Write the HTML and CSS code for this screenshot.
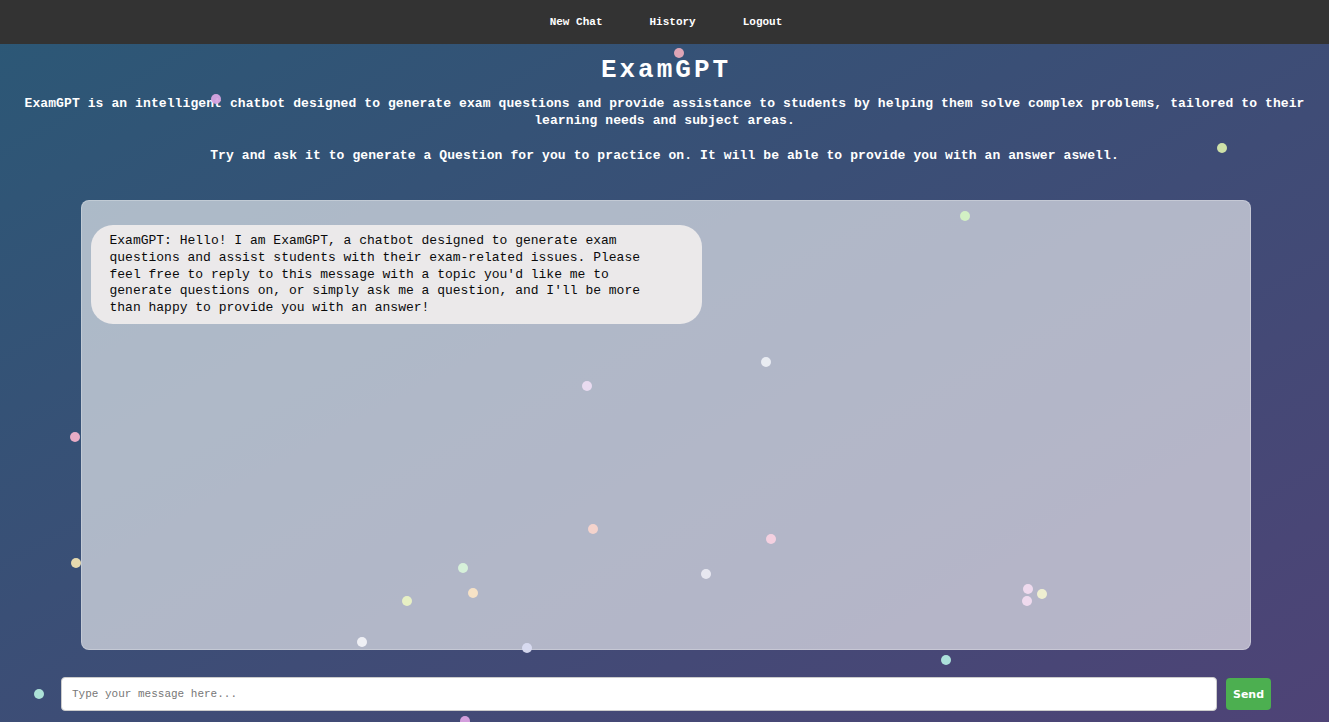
FILE: index.html
```html
<!DOCTYPE html>
<html lang="en">
<head>
<meta charset="utf-8">
<title>ExamGPT</title>
<link rel="stylesheet" href="styles.css">
</head>
<body>
<nav class="navbar">
  <a class="nav-link" href="#">New Chat</a>
  <a class="nav-link" href="#">History</a>
  <a class="nav-link" href="#">Logout</a>
</nav>
<main class="main">
  <h1 class="title">ExamGPT</h1>
  <p class="intro">ExamGPT is an intelligent chatbot designed to generate exam questions and provide assistance to students by helping them solve complex problems, tailored to their learning needs and subject areas.</p>
  <p class="intro intro-second">Try and ask it to generate a Question for you to practice on. It will be able to provide you with an answer aswell.</p>
  <section class="chat-box">
    <div class="bubble bot">ExamGPT: Hello! I am ExamGPT, a chatbot designed to generate exam questions and assist students with their exam-related issues. Please feel free to reply to this message with a topic you'd like me to generate questions on, or simply ask me a question, and I'll be more than happy to provide you with an answer!</div>
  </section>
  <form class="input-row" onsubmit="return false;">
    <input class="msg-input" type="text" placeholder="Type your message here...">
    <button class="send-btn" type="submit">Send</button>
  </form>
</main>
<div class="particles">
  <span class="dot" style="left:679px;top:53px;background:#e8aab9"></span>
  <span class="dot" style="left:216px;top:99px;background:#d6a4e2"></span>
  <span class="dot" style="left:1222px;top:148px;background:#d6e9ab"></span>
  <span class="dot" style="left:965px;top:216px;background:#d4f2c4"></span>
  <span class="dot" style="left:766px;top:362px;background:#eceef4"></span>
  <span class="dot" style="left:587px;top:386px;background:#ecdcf2"></span>
  <span class="dot" style="left:75px;top:437px;background:#f2b2ca"></span>
  <span class="dot" style="left:593px;top:529px;background:#f8d4cc"></span>
  <span class="dot" style="left:771px;top:539px;background:#f8d2e2"></span>
  <span class="dot" style="left:76px;top:563px;background:#f0e2b2"></span>
  <span class="dot" style="left:463px;top:568px;background:#d8f2da"></span>
  <span class="dot" style="left:706px;top:574px;background:#eaeaf2"></span>
  <span class="dot" style="left:473px;top:593px;background:#fae4c6"></span>
  <span class="dot" style="left:407px;top:601px;background:#eaf2c4"></span>
  <span class="dot" style="left:1028px;top:589px;background:#f2dcf0"></span>
  <span class="dot" style="left:1027px;top:601px;background:#f2dcf0"></span>
  <span class="dot" style="left:1042px;top:594px;background:#f2f2d2"></span>
  <span class="dot" style="left:362px;top:642px;background:#f2f2f8"></span>
  <span class="dot" style="left:527px;top:648px;background:#dadcf2"></span>
  <span class="dot" style="left:946px;top:660px;background:#b2eae0"></span>
  <span class="dot" style="left:39px;top:694px;background:#b2eadc"></span>
  <span class="dot" style="left:465px;top:721px;background:#daa2e2"></span>
</div>
</body>
</html>
```

FILE: styles.css
```css
html, body {
  margin: 0;
  padding: 0;
  height: 100%;
}

body {
  position: relative;
  overflow: hidden;
  background: linear-gradient(to bottom right, #2b5876, #4e4376);
  font-family: "Liberation Mono", "DejaVu Sans Mono", monospace;
  color: #fff;
}

.navbar {
  height: 44px;
  background: #333333;
  display: flex;
  justify-content: center;
  align-items: center;
  padding-left: 3px;
}

.nav-link {
  color: #fff;
  text-decoration: none;
  font-weight: bold;
  font-size: 11px;
  padding: 0 23.5px;
}

.main {
  display: flex;
  flex-direction: column;
  align-items: center;
  padding: 0 20px;
}

.title {
  margin: 13px 0 0;
  font-size: 26px;
  line-height: 27px;
  letter-spacing: 3px;
  padding-left: 3px;
  font-weight: bold;
  text-align: center;
}

.intro {
  margin: 11px 0 0;
  font-size: 13px;
  line-height: 17px;
  letter-spacing: 0.1px;
  font-weight: bold;
  text-align: center;
}

.intro-second {
  margin-top: 18px;
}

.chat-box {
  box-sizing: border-box;
  margin-top: 36px;
  margin-left: 2px;
  width: 1170px;
  height: 450px;
  background: rgba(255, 255, 255, 0.6);
  border: 1px solid rgba(255, 255, 255, 0.25);
  border-radius: 8px;
  padding: 24px 9px;
  display: flex;
  flex-direction: column;
  align-items: flex-start;
}

.bubble {
  box-sizing: border-box;
  width: 611px;
  padding: 8px 40px 7px 19px;
  border-radius: 22px;
  background: #ebe9ea;
  color: #0a0a0a;
  font-size: 13px;
  line-height: 16.8px;
}

.input-row {
  margin: 27px 0 0;
  display: flex;
  align-items: center;
  gap: 9px;
  margin-left: 3px;
}

.msg-input {
  box-sizing: border-box;
  width: 1156px;
  height: 34px;
  border: 1px solid #cccccc;
  border-radius: 4px;
  background: #fff;
  padding: 0 10px;
  font-family: "Liberation Mono", "DejaVu Sans Mono", monospace;
  font-size: 11px;
  color: #333;
  outline: none;
}

.msg-input::placeholder {
  color: #777;
}

.send-btn {
  box-sizing: border-box;
  width: 45px;
  height: 32px;
  border: none;
  border-radius: 4px;
  background: #4caf50;
  color: #fff;
  font-family: "DejaVu Sans", "Noto Sans", sans-serif;
  font-weight: bold;
  font-size: 11px;
  padding: 0;
}

.particles {
  position: absolute;
  inset: 0;
  pointer-events: none;
}

.dot {
  position: absolute;
  width: 10px;
  height: 10px;
  margin: -5px 0 0 -5px;
  border-radius: 50%;
  opacity: 0.95;
}
```
